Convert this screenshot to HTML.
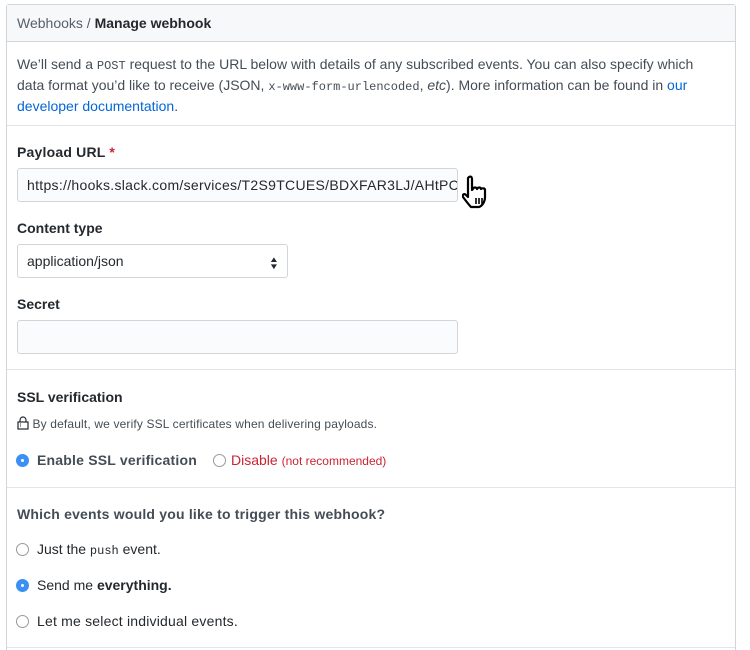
<!DOCTYPE html>
<html><head><meta charset="utf-8"><style>
*{box-sizing:border-box;margin:0;padding:0}
html,body{width:750px;height:650px;overflow:hidden}
body{background:#fff;font-family:"Liberation Sans",sans-serif;font-size:14px;color:#24292e;position:relative}
.box{position:absolute;left:6px;top:4px;width:730px;height:646px;border:1px solid #d1d5da;border-bottom:none;border-radius:3px 3px 0 0}
.hdr{position:absolute;left:0;top:0;right:0;height:37px;background:#f6f8fa;border-bottom:1px solid #d1d5da}
.abs{position:absolute;white-space:nowrap}
.sep{position:absolute;left:0;right:0;height:1px;background:#e1e4e8}
code{font-family:"Liberation Mono",monospace;font-size:12px;line-height:1}
.lbl{font-weight:bold}
.inp{position:absolute;height:34px;border:1px solid #d1d5da;border-radius:3px;background:#fafbfc;padding:0 9px;line-height:32px;overflow:hidden;white-space:nowrap}
.rad{position:absolute;width:13px;height:13px;border-radius:50%;border:1px solid #999;background:#fff}
.rad.on{background:#3b8ff5;border-color:#3b8ff5}
.rad.on::after{content:"";position:absolute;left:4px;top:4px;width:3px;height:3px;border-radius:50%;background:#fff}
a{color:#0366d6;text-decoration:none}
</style></head><body>
<div class="box">
<div class="hdr"><div class="abs" style="left:10px;top:10px;color:#586069">Webhooks / <b style="color:#24292e">Manage webhook</b></div></div>
<div class="abs" style="left:10px;top:49px;line-height:21px;color:#444d56">We’ll send a <code>POST</code> request to the URL below with details of any subscribed events. You can also specify which<br>data format you’d like to receive (JSON, <code>x-www-form-urlencoded</code>, <i>etc</i>). More information can be found in <a>our</a><br><a>developer documentation</a>.</div>
<div class="sep" style="top:120px"></div>
<div class="abs lbl" style="left:10px;top:139px;letter-spacing:0.2px">Payload URL <span style="color:#cb2431">*</span></div>
<div class="inp" style="left:10px;top:163px;width:441px;letter-spacing:0.3px">https://hooks.slack.com/services/T2S9TCUES/BDXFAR3LJ/AHtPC</div>
<div class="abs lbl" style="left:10px;top:215px">Content type</div>
<div class="inp" style="left:10px;top:239px;width:271px;background:#fff">application/json</div>
<div class="abs" style="left:263px;top:251px;font-size:8px;line-height:7px;transform:scaleX(1.3)">▲<br>▼</div>
<div class="abs lbl" style="left:10px;top:291px">Secret</div>
<div class="inp" style="left:10px;top:315px;width:441px"></div>
<div class="sep" style="top:364px"></div>
<div class="abs lbl" style="left:10px;top:384px">SSL verification</div>
<div class="abs" style="left:10px;top:411px;font-size:12px;color:#444d56;letter-spacing:0.15px"><svg width="12" height="14" viewBox="0 0 12 14" style="vertical-align:-2px"><path d="M3 6V4a3 3 0 0 1 6 0v2" fill="none" stroke="#24292e" stroke-width="1.2"/><rect x="1" y="6" width="10" height="7" fill="none" stroke="#24292e" stroke-width="1.2"/><path d="M3 8h1M3 10h1" stroke="#24292e"/></svg> By default, we verify SSL certificates when delivering payloads.</div>
<div class="rad on" style="left:9px;top:449px"></div>
<div class="abs lbl" style="left:30px;top:447px;color:#444d56;letter-spacing:0.2px">Enable SSL verification</div>
<div class="rad" style="left:206px;top:449px"></div>
<div class="abs" style="left:224px;top:447px;color:#cb2431">Disable <span style="font-size:12px">(not recommended)</span></div>
<div class="sep" style="top:482px"></div>
<div class="abs lbl" style="left:10px;top:501px;color:#444d56;letter-spacing:0.2px">Which events would you like to trigger this webhook?</div>
<div class="rad" style="left:9px;top:538px"></div>
<div class="abs" style="left:30px;top:536px">Just the <code>push</code> event.</div>
<div class="rad on" style="left:9px;top:574px"></div>
<div class="abs" style="left:30px;top:572px">Send me <b>everything.</b></div>
<div class="rad" style="left:9px;top:610px"></div>
<div class="abs" style="left:30px;top:608px;letter-spacing:0.2px">Let me select individual events.</div>
<div class="sep" style="top:642px"></div>
</div>
<svg class="abs" style="left:462px;top:174px" width="34" height="36" viewBox="0 0 34 36"><path d="M7 3c2-1 3 0 3 2v11l1-1c0-2 4-2 4 0 1-2 4-2 4 0 1-1 4-1 4 1v7c0 5-3 9-6 10h-8c-2-2-5-6-8-10-1-2 1-4 3-2l2 2V4z" fill="#fff" stroke="#000" stroke-width="2.2" stroke-linejoin="round"/><path d="M14 24v6M17 24v6M20 24v6" stroke="#000" stroke-width="1.6"/></svg>
</body></html>
